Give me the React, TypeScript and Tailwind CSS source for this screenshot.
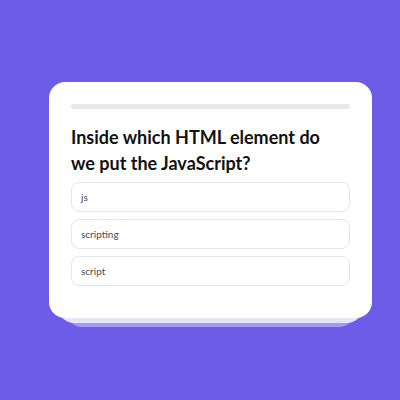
const options = ['js', 'scripting', 'script'];

export default function App() {
  return (
    <div className="min-h-screen w-full bg-[#6c5ce7] pt-[82px] font-['Lato',sans-serif]">
      <div className="ml-[49px] w-[323px]">
        <div className="relative z-10 rounded-[16px] bg-white px-[22px] pt-[22px] pb-[32px]">
          <div className="h-[5px] w-full rounded-full bg-[#e8e8e8]" />
          <h2 className="mt-[15px] max-w-[262px] text-[18px] font-bold leading-[26px] text-[#111]">
            Inside which HTML element do we put the JavaScript?
          </h2>
          <div className="mt-[6px] flex flex-col gap-[7px]">
            {options.map((o) => (
              <div
                key={o}
                className="flex h-[30px] items-center rounded-[8px] border border-[#e6e6e6] px-[9px] text-[10px] text-[#4a4a4a]"
              >
                {o}
              </div>
            ))}
          </div>
        </div>
        <div className="relative z-[5] mx-[9px] -mt-[16px] h-[21px] rounded-b-[16px] bg-[#e7e4fa]" />
        <div className="relative mx-[17px] -mt-[16px] h-[20px] rounded-b-[16px] bg-[#a59cf0]" />
      </div>
    </div>
  );
}
